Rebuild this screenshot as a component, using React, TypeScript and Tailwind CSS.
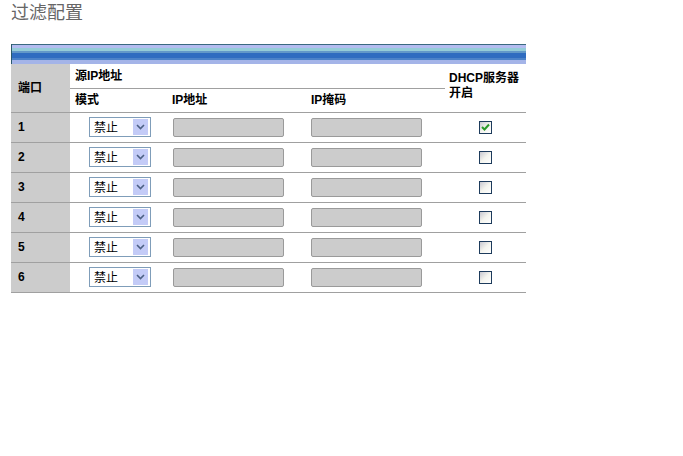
import React from 'react';

const rows = [
  { port: 1, checked: true },
  { port: 2, checked: false },
  { port: 3, checked: false },
  { port: 4, checked: false },
  { port: 5, checked: false },
  { port: 6, checked: false },
];

function ModeSelect() {
  return (
    <div className="flex h-[20px] w-[62px] items-center border border-[#7f9db9] bg-white pl-[4px] pr-[2px]">
      <span className="flex-1 pt-[1px] text-[12px] leading-none text-black">禁止</span>
      <span className="flex h-[16px] w-[15px] items-center justify-center bg-[#c3cbf7]">
        <svg width="9" height="6" viewBox="0 0 9 6">
          <path d="M1 1 L4.5 4.5 L8 1" fill="none" stroke="#4d6185" strokeWidth="1.6" />
        </svg>
      </span>
    </div>
  );
}

function AddrInput() {
  return <div className="h-[19px] w-[111px] rounded-[2px] border border-[#9a9a9a] bg-[#cccccc]" />;
}

function CheckBox({ checked }: { checked: boolean }) {
  return (
    <div className="flex h-[13px] w-[13px] items-center justify-center border border-[#1d3b5c] bg-gradient-to-br from-[#c8c8d0] via-[#f4f4ee] to-white">
      {checked ? (
        <svg width="9" height="8" viewBox="0 0 9 8">
          <path d="M1 4 L3.5 6.5 L8 1.5" fill="none" stroke="#2a9a2a" strokeWidth="2" />
        </svg>
      ) : null}
    </div>
  );
}

export default function App() {
  return (
    <div className="h-[456px] w-[683px] bg-white pt-[2px] font-['Liberation_Sans','Noto_Sans_CJK_SC',sans-serif]">
      <div className="pl-[11px] text-[18px] leading-[22px] text-[#666666]">过滤配置</div>
      <div className="ml-[11px] mt-[20px] w-[515px]">
        <div className="h-[20px] border-l border-[#2c5a6c] bg-[linear-gradient(to_bottom,#3a6a80_0px,#3a6a80_1px,#b4bcf0_1px,#b4bcf0_4px,#94ccd8_4px,#94ccd8_7px,#6298c8_7px,#6298c8_9px,#2f6cc0_9px,#2f6cc0_14px,#4c82c8_14px,#4c82c8_16px,#a4b4e8_16px,#a4b4e8_20px)]" />
        <table className="w-[515px] border-collapse text-[12px] font-bold text-black">
          <tbody>
            <tr>
              <td rowSpan={2} className="w-[59px] border-b border-[#a0a0a0] bg-[#cccccc] pl-[7px] align-middle">端口</td>
              <td colSpan={3} className="h-[24px] border-b border-[#a0a0a0] pl-[5px] align-middle">源IP地址</td>
              <td rowSpan={2} className="w-[81px] border-b border-[#a0a0a0] pl-[4px] pt-[1px] align-top leading-[15px]">
                <div className="mt-[6px]">DHCP服务器</div>
                <div>开启</div>
              </td>
            </tr>
            <tr>
              <td className="h-[24px] w-[98px] border-b border-[#a0a0a0] pl-[5px] align-middle">模式</td>
              <td className="w-[138px] border-b border-[#a0a0a0] pl-[4px] align-middle">IP地址</td>
              <td className="w-[139px] border-b border-[#a0a0a0] pl-[5px] align-middle">IP掩码</td>
            </tr>
            {rows.map((row) => (
              <tr key={row.port}>
                <td className="h-[30px] border-b border-[#a0a0a0] bg-[#cccccc] pl-[7px] align-middle">{row.port}</td>
                <td className="border-b border-[#a0a0a0] pl-[19px] align-middle font-normal">
                  <ModeSelect />
                </td>
                <td className="border-b border-[#a0a0a0] pl-[5px] align-middle">
                  <AddrInput />
                </td>
                <td className="border-b border-[#a0a0a0] pl-[5px] align-middle">
                  <AddrInput />
                </td>
                <td className="border-b border-[#a0a0a0] pl-[34px] align-middle">
                  <CheckBox checked={row.checked} />
                </td>
              </tr>
            ))}
          </tbody>
        </table>
      </div>
    </div>
  );
}
